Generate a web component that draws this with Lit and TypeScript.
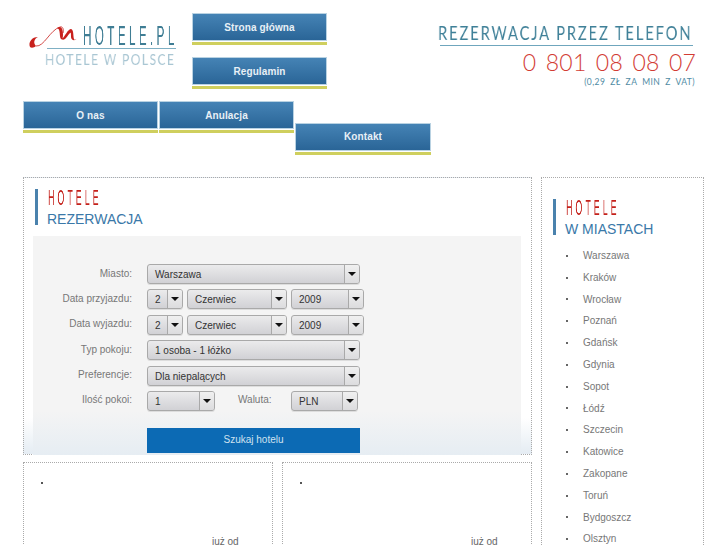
import { LitElement, html, css } from "lit";
import { customElement } from "lit/decorators.js";

const cities = ["Warszawa","Kraków","Wrocław","Poznań","Gdańsk","Gdynia","Sopot","Łódź","Szczecin","Katowice","Zakopane","Toruń","Bydgoszcz","Olsztyn"];

@customElement("app-root")
export class AppRoot extends LitElement {
  static styles = css`
    :host { display:block; width:727px; height:545px; overflow:hidden; background:#fff; font-family:"Liberation Sans",Arial,sans-serif; font-size:10px; color:#777; }
    * { box-sizing:border-box; }
    .page { padding:0 23px; width:727px; }
    .top { display:flex; height:101px; }
    .logo { width:169px; padding:25px 0 0 5px; flex:none; }
    .logo-row { display:flex; height:21px; align-items:flex-start; }
    .logo-row svg { flex:none; display:block; width:55px; height:26px; margin-top:-1px; }
    .logo-title { font-size:28px; line-height:21px; width:93px; white-space:nowrap; color:#3f7d94; letter-spacing:7.9px; transform:scaleX(.42); transform-origin:left; will-change:transform; }
    .logo-line { height:1px; background:#7fb0c4; margin:2px 16px 0 19px; }
    .logo-sub { font-family:Lato,sans-serif; font-size:16px; line-height:14px; margin:3px 0 0 17px; white-space:nowrap; color:#a9c6d3; letter-spacing:1.9px; transform:scaleX(.755); transform-origin:left; will-change:transform; }
    .top-nav { width:135px; flex:none; padding-top:13px; display:flex; flex-direction:column; gap:13px; }
    .btn { display:block; height:28px; line-height:28px; text-align:center; font-weight:bold; font-size:10px; letter-spacing:.12px; color:#e8f0f6; background:linear-gradient(#4583b5,#2a6597); border:1px solid #b9d2e2; box-shadow:0 1px 0 #fff, 0 4px 0 #cfcf5e; margin-bottom:3px; }
    .phone { margin-left:auto; width:258px; margin-right:8px; padding-top:25px; text-align:right; flex:none; }
    .phone-t { font-family:Lato,sans-serif; font-size:19px; line-height:16px; color:#3f8098; white-space:nowrap; letter-spacing:2.4px; text-align:left; transform:scaleX(.775); transform-origin:left; will-change:transform; }
    .phone-line { height:1px; background:#6fa6bd; margin:4px 3px 0 2px; }
    .phone-n { font-family:Lato,sans-serif; font-size:23px; line-height:24px; margin:4px 0 0; color:#d23c34; white-space:pre; word-spacing:3px; letter-spacing:.2px; font-weight:300; }
    .phone-s { font-family:Lato,sans-serif; font-size:8.5px; line-height:11px; margin:3px 1px 0 0; color:#4f8ba4; word-spacing:2.5px; letter-spacing:.42px; white-space:nowrap; }
    .nav { display:flex; height:76px; gap:1px; }
    .nav .btn { width:135px; flex:none; }
    .nav .low { margin-top:22px; width:136px; line-height:26px; }
    .main { display:flex; gap:9px; align-items:flex-start; }
    .left { width:509px; flex:none; }
    .panel { height:278px; border:1px dotted #aaa; background:linear-gradient(#fff 240px,#e3ebf2 278px); padding:11px 10px 0 9px; }
    .head { border-left:3px solid #4a82ad; margin-left:2px; height:36px; padding-left:9px; }
    .head-a { font-size:22px; line-height:17px; height:17px; width:130px; margin-left:1px; white-space:nowrap; color:#c4201a; letter-spacing:7.7px; transform:scaleX(.4); transform-origin:left; will-change:transform; }
    .head-b { font-size:14px; line-height:17px; margin-top:5px; color:#3a78a8; white-space:nowrap; }
    .form { margin-top:11px; height:219px; background:linear-gradient(#f4f4f4 175px,#e6edf3 219px); padding-top:28px; display:flex; flex-direction:column; gap:5.4px; }
    .row { display:flex; height:20px; align-items:center; }
    .lab { width:99px; text-align:right; margin-right:15px; flex:none; padding-bottom:2px; color:#777; }
    .sel { height:20px; flex:none; display:flex; border:1px solid #a9a9a9; border-radius:3px; background:linear-gradient(#ebebec,#d1d1d5); color:#333; line-height:20px; box-shadow:0 1px 0 #ddd; margin-right:4px; }
    .sel span { flex:1; padding-left:7px; white-space:nowrap; }
    .sel i { width:15px; flex:none; border-left:1px solid #a9a9a9; display:flex; align-items:center; justify-content:center; background:linear-gradient(#f0f0f0,#dcdcde); border-radius:0 2px 2px 0; }
    .sel i::after { content:""; border:4px solid transparent; border-top:4px solid #111; border-bottom:0; }
    .w213 { width:213px; } .w36 { width:36px; } .w99 { width:100px; } .w73 { width:73px; } .w68 { width:68px; } .w67 { width:67px; margin:0; }
    .wal { width:72px; flex:none; padding:0 0 2px 19px; color:#777; }
    .go { margin:11.6px 0 0 114px; width:213px; height:25px; line-height:24px; text-align:center; background:#0c6ab4; color:#cfe2f0; border:0; }
    .cards { display:flex; gap:9px; margin-top:7px; }
    .card { width:250px; height:120px; border:1px dotted #aaa; padding:19px 0 0 17px; position:relative; }
    .dot { width:2px; height:2px; background:#555; display:block; }
    .from { display:block; margin:52px 0 0 171px; color:#666; white-space:nowrap; }
    .side { width:163px; flex:none; height:400px; border:1px dotted #aaa; padding:21px 0 0 11px; }
    .side .head { margin-left:0; }
    .side ul { list-style:none; margin:10px 0 0; padding:0 0 0 13px; }
    .side li { height:21.8px; line-height:21.8px; display:flex; align-items:center; white-space:nowrap; color:#777; }
    .side li::before { content:""; width:2px; height:2px; background:#666; margin-right:15px; flex:none; }
  `;
  private sel(t: string, w: string) { return html`<div class="sel ${w}"><span>${t}</span><i></i></div>`; }
  render() {
    return html`<div class="page">
      <div class="top">
        <div class="logo">
          <div class="logo-row">
            <svg viewBox="28 24 55 26">
              <path d="M30 47C28 42 32 37 38 37 34 39 33 43 36 46 34 48 31 48 30 47Z" fill="#c8201c"/>
              <path d="M36 46C44 47 50 30 60 27 63 26 64 30 63 33" fill="none" stroke="#c8201c" stroke-width=".8"/>
              <path d="M57 28C62 25 63 30 63 35 63 39 61 41 62 39 65 36 68 29 71 29 74 30 73 36 74 39 74 40 76 40 77 38 75 42 71 40 71 37 71 34 71 32 70 33 67 36 65 42 61 39 59 37 61 29 57 28Z" fill="#c8201c"/>
            </svg>
            <div class="logo-title">HOTELE.PL</div>
          </div>
          <div class="logo-line"></div>
          <div class="logo-sub">HOTELE W POLSCE</div>
        </div>
        <div class="top-nav">
          <a class="btn">Strona główna</a>
          <a class="btn">Regulamin</a>
        </div>
        <div class="phone">
          <div class="phone-t">REZERWACJA PRZEZ TELEFON</div>
          <div class="phone-line"></div>
          <div class="phone-n">0 801 08 08 07</div>
          <div class="phone-s">(0,29 ZŁ ZA MIN Z VAT)</div>
        </div>
      </div>
      <div class="nav">
        <a class="btn">O nas</a>
        <a class="btn">Anulacja</a>
        <a class="btn low">Kontakt</a>
      </div>
      <div class="main">
        <div class="left">
          <div class="panel">
            <div class="head"><div class="head-a">HOTELE</div><div class="head-b">REZERWACJA</div></div>
            <div class="form">
              <div class="row"><div class="lab">Miasto:</div>${this.sel("Warszawa","w213")}</div>
              <div class="row"><div class="lab">Data przyjazdu:</div>${this.sel("2","w36")}${this.sel("Czerwiec","w99")}${this.sel("2009","w73")}</div>
              <div class="row"><div class="lab">Data wyjazdu:</div>${this.sel("2","w36")}${this.sel("Czerwiec","w99")}${this.sel("2009","w73")}</div>
              <div class="row"><div class="lab">Typ pokoju:</div>${this.sel("1 osoba - 1 łóżko","w213")}</div>
              <div class="row"><div class="lab">Preferencje:</div>${this.sel("Dla niepalących","w213")}</div>
              <div class="row"><div class="lab">Ilość pokoi:</div>${this.sel("1","w68")}<div class="wal">Waluta:</div>${this.sel("PLN","w67")}</div>
              <div class="go">Szukaj hotelu</div>
            </div>
          </div>
          <div class="cards">
            <div class="card"><b class="dot"></b><span class="from">już od</span></div>
            <div class="card"><b class="dot"></b><span class="from">już od</span></div>
          </div>
        </div>
        <div class="side">
          <div class="head"><div class="head-a">HOTELE</div><div class="head-b">W MIASTACH</div></div>
          <ul>${cities.map((c) => html`<li>${c}</li>`)}</ul>
        </div>
      </div>
    </div>`;
  }
}
